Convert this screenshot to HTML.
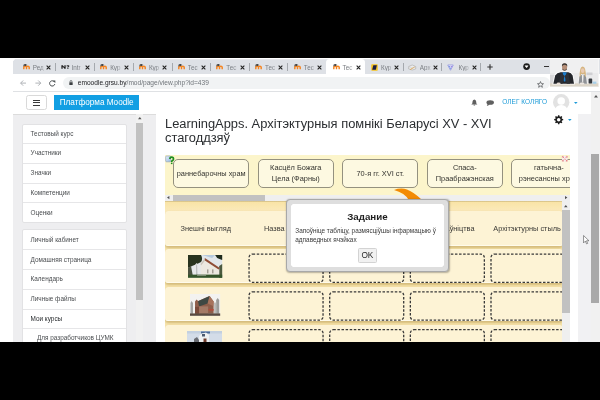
<!DOCTYPE html>
<html><head><meta charset="utf-8">
<style>
*{margin:0;padding:0;box-sizing:border-box}
html,body{width:600px;height:400px;overflow:hidden;background:#fff;font-family:"Liberation Sans",sans-serif}
body{filter:blur(0.3px)}
.a{position:absolute}
svg{display:block;overflow:visible}
#blk1{left:0;top:0;width:600px;height:57.75px;background:#000}
#blk2{left:0;top:341.7px;width:600px;height:59px;background:#000}
#tabs{left:12.5px;top:59.2px;width:588px;height:15.3px;background:#dee1e6;clip-path:polygon(2.5px 0,100% 0,100% 100%,0 100%,0 2.5px)}
.tab{position:absolute;top:59.2px;height:15.3px;width:38.7px}
.tab.act{background:#fff;border-radius:3.5px 3.5px 0 0}
.tab .fav{position:absolute;left:6.4px;top:5.2px;width:7px;height:7px}
.tab .tt{position:absolute;left:16.2px;top:5.9px;font-size:6.3px;line-height:1;color:#7a7e83;white-space:nowrap;width:13px;overflow:hidden;-webkit-mask-image:linear-gradient(90deg,#000 55%,transparent 100%)}
.tab .x{position:absolute;left:29.5px;top:5.4px;width:5px;height:5px}
.sep{position:absolute;top:62.8px;width:0.8px;height:8.6px;background:#a5a9ae}
#toolbar{left:12.5px;top:74.5px;width:588px;height:17px;background:#fff;border-bottom:0.8px solid #dfe1e4}
#omni{left:62.5px;top:77.4px;width:487px;height:11.6px;border-radius:6px;background:#f1f3f4}
#url{left:77.8px;top:79.9px;font-size:6.6px;line-height:1;color:#202124;white-space:nowrap}
#url span{color:#70757a}
#nav{left:12.5px;top:91.5px;width:579px;height:23px;background:#fff;border-bottom:0.8px solid #dcdcdc}
#drawer{left:12.5px;top:114.5px;width:143.5px;height:227.5px;background:#eeeef0}
#main{left:156px;top:114px;width:422px;height:227.5px;background:#fff}
#rgrey{left:578px;top:114px;width:14px;height:227.5px;background:#f1f1f3}
#pscroll{left:591.3px;top:91.5px;width:8.7px;height:250px;background:#f1f1f1}
</style></head><body>
<div class="a" id="blk1"></div>
<div class="a" id="tabs"></div>
<div class="tab" style="left:16.6px"><svg class="fav" style="top:5.3px;height:5.2px" viewBox="0 0 14 10.4"><path d="M1.6 10.4V6.4Q1.6 4.6 4.3 4.6Q7 4.6 7 6.4V10.4M7 6.4Q7 4.6 9.7 4.6Q12.4 4.6 12.4 6.4V10.4" fill="none" stroke="#f5841f" stroke-width="2.9"/><path d="M0.2 2L4.4 0.2L8.6 2L4.4 3.9Z" fill="#2a2a2a"/><path d="M1.3 2.5V5" stroke="#2a2a2a" stroke-width="1.1"/></svg><div class="tt">Ред</div><svg class="x" viewBox="0 0 10 10"><path d="M1.3 1.3L8.7 8.7M8.7 1.3L1.3 8.7" stroke="#202020" stroke-width="2.1"/></svg></div>
<div class="tab" style="left:55.3px"><svg class="fav" style="left:5.4px;top:6.1px;width:8.6px;height:3.8px" viewBox="0 0 16 9" preserveAspectRatio="none"><path d="M0.8 9V0.6H3L6.4 5.6V0.6H8.6V9H6.6L3 3.8V9Z" fill="#111"/><path d="M10 2.8Q10 0.4 12.8 0.4Q15.6 0.4 15.6 2.6Q15.6 4.2 13.8 5V6.2H11.8V4.2Q13.4 3.6 13.4 2.7Q13.4 2 12.8 2Q12 2 12 3Z" fill="#111"/><rect x="11.8" y="7" width="2" height="2" fill="#111"/></svg><div class="tt">Intr</div><svg class="x" viewBox="0 0 10 10"><path d="M1.3 1.3L8.7 8.7M8.7 1.3L1.3 8.7" stroke="#202020" stroke-width="2.1"/></svg></div>
<div class="tab" style="left:94.0px"><svg class="fav" style="top:5.3px;height:5.2px" viewBox="0 0 14 10.4"><path d="M1.6 10.4V6.4Q1.6 4.6 4.3 4.6Q7 4.6 7 6.4V10.4M7 6.4Q7 4.6 9.7 4.6Q12.4 4.6 12.4 6.4V10.4" fill="none" stroke="#f5841f" stroke-width="2.9"/><path d="M0.2 2L4.4 0.2L8.6 2L4.4 3.9Z" fill="#2a2a2a"/><path d="M1.3 2.5V5" stroke="#2a2a2a" stroke-width="1.1"/></svg><div class="tt">Кур</div><svg class="x" viewBox="0 0 10 10"><path d="M1.3 1.3L8.7 8.7M8.7 1.3L1.3 8.7" stroke="#202020" stroke-width="2.1"/></svg></div>
<div class="tab" style="left:132.7px"><svg class="fav" style="top:5.3px;height:5.2px" viewBox="0 0 14 10.4"><path d="M1.6 10.4V6.4Q1.6 4.6 4.3 4.6Q7 4.6 7 6.4V10.4M7 6.4Q7 4.6 9.7 4.6Q12.4 4.6 12.4 6.4V10.4" fill="none" stroke="#f5841f" stroke-width="2.9"/><path d="M0.2 2L4.4 0.2L8.6 2L4.4 3.9Z" fill="#2a2a2a"/><path d="M1.3 2.5V5" stroke="#2a2a2a" stroke-width="1.1"/></svg><div class="tt">Кур</div><svg class="x" viewBox="0 0 10 10"><path d="M1.3 1.3L8.7 8.7M8.7 1.3L1.3 8.7" stroke="#202020" stroke-width="2.1"/></svg></div>
<div class="tab" style="left:171.4px"><svg class="fav" style="top:5.3px;height:5.2px" viewBox="0 0 14 10.4"><path d="M1.6 10.4V6.4Q1.6 4.6 4.3 4.6Q7 4.6 7 6.4V10.4M7 6.4Q7 4.6 9.7 4.6Q12.4 4.6 12.4 6.4V10.4" fill="none" stroke="#f5841f" stroke-width="2.9"/><path d="M0.2 2L4.4 0.2L8.6 2L4.4 3.9Z" fill="#2a2a2a"/><path d="M1.3 2.5V5" stroke="#2a2a2a" stroke-width="1.1"/></svg><div class="tt">Тес</div><svg class="x" viewBox="0 0 10 10"><path d="M1.3 1.3L8.7 8.7M8.7 1.3L1.3 8.7" stroke="#202020" stroke-width="2.1"/></svg></div>
<div class="tab" style="left:210.1px"><svg class="fav" style="top:5.3px;height:5.2px" viewBox="0 0 14 10.4"><path d="M1.6 10.4V6.4Q1.6 4.6 4.3 4.6Q7 4.6 7 6.4V10.4M7 6.4Q7 4.6 9.7 4.6Q12.4 4.6 12.4 6.4V10.4" fill="none" stroke="#f5841f" stroke-width="2.9"/><path d="M0.2 2L4.4 0.2L8.6 2L4.4 3.9Z" fill="#2a2a2a"/><path d="M1.3 2.5V5" stroke="#2a2a2a" stroke-width="1.1"/></svg><div class="tt">Тес</div><svg class="x" viewBox="0 0 10 10"><path d="M1.3 1.3L8.7 8.7M8.7 1.3L1.3 8.7" stroke="#202020" stroke-width="2.1"/></svg></div>
<div class="tab" style="left:248.8px"><svg class="fav" style="top:5.3px;height:5.2px" viewBox="0 0 14 10.4"><path d="M1.6 10.4V6.4Q1.6 4.6 4.3 4.6Q7 4.6 7 6.4V10.4M7 6.4Q7 4.6 9.7 4.6Q12.4 4.6 12.4 6.4V10.4" fill="none" stroke="#f5841f" stroke-width="2.9"/><path d="M0.2 2L4.4 0.2L8.6 2L4.4 3.9Z" fill="#2a2a2a"/><path d="M1.3 2.5V5" stroke="#2a2a2a" stroke-width="1.1"/></svg><div class="tt">Тес</div><svg class="x" viewBox="0 0 10 10"><path d="M1.3 1.3L8.7 8.7M8.7 1.3L1.3 8.7" stroke="#202020" stroke-width="2.1"/></svg></div>
<div class="tab" style="left:287.5px"><svg class="fav" style="top:5.3px;height:5.2px" viewBox="0 0 14 10.4"><path d="M1.6 10.4V6.4Q1.6 4.6 4.3 4.6Q7 4.6 7 6.4V10.4M7 6.4Q7 4.6 9.7 4.6Q12.4 4.6 12.4 6.4V10.4" fill="none" stroke="#f5841f" stroke-width="2.9"/><path d="M0.2 2L4.4 0.2L8.6 2L4.4 3.9Z" fill="#2a2a2a"/><path d="M1.3 2.5V5" stroke="#2a2a2a" stroke-width="1.1"/></svg><div class="tt">Тес</div><svg class="x" viewBox="0 0 10 10"><path d="M1.3 1.3L8.7 8.7M8.7 1.3L1.3 8.7" stroke="#202020" stroke-width="2.1"/></svg></div>
<div class="tab act" style="left:326.2px"><svg class="fav" style="top:5.3px;height:5.2px" viewBox="0 0 14 10.4"><path d="M1.6 10.4V6.4Q1.6 4.6 4.3 4.6Q7 4.6 7 6.4V10.4M7 6.4Q7 4.6 9.7 4.6Q12.4 4.6 12.4 6.4V10.4" fill="none" stroke="#f5841f" stroke-width="2.9"/><path d="M0.2 2L4.4 0.2L8.6 2L4.4 3.9Z" fill="#2a2a2a"/><path d="M1.3 2.5V5" stroke="#2a2a2a" stroke-width="1.1"/></svg><div class="tt">Тес</div><svg class="x" viewBox="0 0 10 10"><path d="M1.3 1.3L8.7 8.7M8.7 1.3L1.3 8.7" stroke="#202020" stroke-width="2.1"/></svg></div>
<div class="tab" style="left:364.9px"><svg class="fav" style="top:4.6px" viewBox="0 0 14 14"><rect x="0.5" y="0.5" width="13" height="13" rx="1.5" fill="#f6c21c"/><path d="M4.6 2.4H11.8L9.6 11.6H2.4Z" fill="#1a1d45"/></svg><div class="tt">Кур</div><svg class="x" viewBox="0 0 10 10"><path d="M1.3 1.3L8.7 8.7M8.7 1.3L1.3 8.7" stroke="#202020" stroke-width="2.1"/></svg></div>
<div class="tab" style="left:403.6px"><svg class="fav" style="top:4.6px;left:4.6px;width:8.4px" viewBox="0 0 16 14"><path d="M1 5L8 2L15 5L15 10L8 12L1 10Z" fill="#ececec" stroke="#9c9c9c" stroke-width="1"/><path d="M4 11L13 6" stroke="#e09a32" stroke-width="1.6"/><path d="M1 5L8 8L15 5" fill="none" stroke="#bdbdbd" stroke-width="0.8"/></svg><div class="tt">Арх</div><svg class="x" viewBox="0 0 10 10"><path d="M1.3 1.3L8.7 8.7M8.7 1.3L1.3 8.7" stroke="#202020" stroke-width="2.1"/></svg></div>
<div class="tab" style="left:442.3px"><svg class="fav" style="top:4.4px;left:4.6px" viewBox="0 0 14 14"><path d="M1.5 2H12.5L7 12.5Z" fill="#f2f2fb" stroke="#8588dc" stroke-width="1.4" stroke-linejoin="round"/><circle cx="5" cy="5.5" r="1.6" fill="#6f8fe0"/><circle cx="9" cy="5.5" r="1.6" fill="#9a7fe0"/><circle cx="7" cy="8.6" r="1.4" fill="#7a9ae8"/></svg><div class="tt">Кур</div><svg class="x" viewBox="0 0 10 10"><path d="M1.3 1.3L8.7 8.7M8.7 1.3L1.3 8.7" stroke="#202020" stroke-width="2.1"/></svg></div>
<div class="sep" style="left:54.9px"></div>
<div class="sep" style="left:94.3px"></div>
<div class="sep" style="left:132.9px"></div>
<div class="sep" style="left:171.8px"></div>
<div class="sep" style="left:210.3px"></div>
<div class="sep" style="left:248.9px"></div>
<div class="sep" style="left:287.4px"></div>
<div class="sep" style="left:402.9px"></div>
<div class="sep" style="left:441.3px"></div>
<div class="sep" style="left:480.4px"></div>

<!-- tab strip right controls -->
<svg class="a" style="left:487px;top:64px;width:6px;height:6px" viewBox="0 0 10 10"><path d="M5 0.5V9.5M0.5 5H9.5" stroke="#333" stroke-width="1.9"/></svg>
<svg class="a" style="left:522.5px;top:63.4px;width:7.2px;height:7.2px" viewBox="0 0 10 10"><circle cx="5" cy="5" r="4.7" fill="#1e1e1e"/><path d="M2.9 3.9H7.1L5 6.6Z" fill="#fff" stroke="#fff" stroke-width="0.8" stroke-linejoin="round"/></svg>
<div class="a" style="left:543.5px;top:65.8px;width:5.5px;height:1.2px;background:#333"></div>
<!-- toolbar -->
<div class="a" id="toolbar"></div>
<svg class="a" style="left:20px;top:80px;width:6.4px;height:6.2px" viewBox="0 0 10 10"><path d="M9.5 5H1M5 0.8L0.8 5L5 9.2" fill="none" stroke="#a3a7ab" stroke-width="1.4"/></svg>
<svg class="a" style="left:34.6px;top:80px;width:6.4px;height:6.2px" viewBox="0 0 10 10"><path d="M0.5 5H9M5 0.8L9.2 5L5 9.2" fill="none" stroke="#a3a7ab" stroke-width="1.4"/></svg>
<svg class="a" style="left:48.9px;top:79.8px;width:6.6px;height:6.6px" viewBox="0 0 10 10"><path d="M8.6 3.6A4 4 0 1 0 8.8 6.2" fill="none" stroke="#3c4043" stroke-width="1.4"/><path d="M6.2 0.6L9.6 0.6L9.6 4.2Z" fill="#3c4043"/></svg>
<div class="a" id="omni"></div>
<svg class="a" style="left:68.6px;top:80.2px;width:4px;height:5.4px" viewBox="0 0 8 11"><path d="M2 5V3.4Q2 1 4 1Q6 1 6 3.4V5" fill="none" stroke="#3c4043" stroke-width="1.4"/><rect x="0.6" y="4.6" width="6.8" height="5.8" rx="0.8" fill="#3c4043"/></svg>
<div class="a" id="url">emoodle.grsu.by<span>/mod/page/view.php?id=439</span></div>
<svg class="a" style="left:537.3px;top:80.6px;width:7px;height:7px" viewBox="0 0 10 10"><path d="M5 0.8L6.2 3.7L9.3 3.9L6.9 5.9L7.7 9L5 7.3L2.3 9L3.1 5.9L0.7 3.9L3.8 3.7Z" fill="none" stroke="#3c4043" stroke-width="0.9" stroke-linejoin="round"/></svg>
<!-- webcam -->
<svg class="a" style="left:549.6px;top:59.2px;width:49px;height:27.5px;filter:blur(0.25px)" viewBox="0 0 49 27.5" preserveAspectRatio="none">
<rect width="49" height="27.5" fill="#eaeaeb"/>
<rect x="0" y="0" width="49" height="14" fill="#f0f0f1"/>
<rect x="36.5" y="13.5" width="6" height="2.6" fill="#d0d0d3"/>
<rect x="0" y="16" width="5" height="9" fill="#d8d8da"/>
<rect x="0" y="24.3" width="49" height="3.2" fill="#dcd5c8"/>
<path d="M2.2 25.5L4.2 16Q6 13 10.5 12.6L18.5 12.6Q22 13 23.4 16L25 25.5Z" fill="#fff" opacity=".8"/>
<path d="M3.4 24.8L5.2 16.4Q6.8 13.6 10.8 13.2L18.2 13.2Q21.4 13.6 22.6 16.4L24 24.8Z" fill="#24262b"/>
<path d="M12.6 13.2H16.6L15.4 22.6H13.8Z" fill="#1d7fcf"/>
<path d="M10.8 13.2L14.6 17L12.4 24.8L9 24.8Z" fill="#2e3036"/>
<path d="M18.2 13.2L14.6 17L16.8 24.8L20 24.8Z" fill="#2e3036"/>
<ellipse cx="14.6" cy="8" rx="3" ry="3.7" fill="#fff" opacity=".7"/>
<ellipse cx="14.6" cy="8" rx="2.6" ry="3.4" fill="#b68f78"/>
<path d="M11.9 7.4Q11.7 4.2 14.6 4.2Q17.5 4.2 17.3 7.4Q16.5 5.6 14.6 5.7Q12.7 5.7 11.9 7.4Z" fill="#3a3533"/>
<path d="M12.4 9.6Q14.6 12.2 16.8 9.6V10.8Q14.6 12.6 12.4 10.8Z" fill="#5d4d45"/>
<ellipse cx="8.6" cy="24.4" rx="2" ry="1" fill="#e8ddd4"/>
<path d="M28 25L28.8 17.4Q30 15 32.7 15Q35.4 15 36.6 17.4L37.6 25Z" fill="#fff" opacity=".7"/>
<path d="M28.6 24.8L29.3 17.8Q30.3 15.6 32.7 15.6Q35.1 15.6 36.1 17.8L37 24.8Z" fill="#909397"/>
<path d="M31.8 15.8H33.6L33.2 23.6H32.2Z" fill="#efeeec"/>
<path d="M29.7 18.2Q29.2 7.6 32.7 7.4Q36.2 7.6 35.8 18.2Q34.6 17.6 34.3 15H31.1Q30.8 17.6 29.7 18.2Z" fill="#d6b580"/>
<ellipse cx="32.7" cy="11.7" rx="1.8" ry="2.4" fill="#e8cab2"/>
<ellipse cx="32" cy="24.4" rx="2.4" ry="1" fill="#ece6e0"/>
<rect x="38.6" y="19.6" width="3.6" height="5" rx="0.8" fill="#363a40"/>
<rect x="42.6" y="22.6" width="3.8" height="2.2" fill="#a7d0ea"/>
<path d="M48.4 0H49V27.5H48.4Z" fill="#fafafa"/>
</svg>
<!-- moodle navbar -->
<div class="a" id="nav"></div>
<div class="a" style="left:26.3px;top:95.2px;width:20.6px;height:15px;border:0.8px solid #d9d9d9;border-radius:2.5px;background:#fff"></div>
<div class="a" style="left:33.3px;top:99.7px;width:6.5px;height:1.3px;background:#3a3a3a"></div>
<div class="a" style="left:33.3px;top:102.2px;width:6.5px;height:1.3px;background:#3a3a3a"></div>
<div class="a" style="left:33.3px;top:104.7px;width:6.5px;height:1.3px;background:#3a3a3a"></div>
<div class="a" style="left:53.5px;top:95.2px;width:85.2px;height:15px;background:#129fe3"></div>
<div class="a" style="left:59.7px;top:99.0px;font-size:8.2px;line-height:1;color:#fff;white-space:nowrap">Платформа Moodle</div>
<svg class="a" style="left:470.6px;top:99px;width:6.7px;height:6.7px" viewBox="0 0 10 10"><path d="M5 0.6Q7.6 0.8 7.8 4.2L8 6.6L9.6 8.2H0.4L2 6.6L2.2 4.2Q2.4 0.8 5 0.6Z" fill="#5f5f5f"/><ellipse cx="5" cy="9" rx="1.3" ry="0.9" fill="#5f5f5f"/></svg>
<svg class="a" style="left:486px;top:99.8px;width:8px;height:6.2px" viewBox="0 0 12 9.3"><ellipse cx="6.3" cy="3.8" rx="5.6" ry="3.5" fill="#5f5f5f"/><path d="M2.6 5.6L1.2 9.2L5.6 7Z" fill="#5f5f5f"/></svg>
<div class="a" style="left:502.3px;top:99.4px;font-size:6.5px;line-height:1;color:#1d9bd8;white-space:nowrap;letter-spacing:0px">ОЛЕГ КОЛЯГО</div>
<svg class="a" style="left:552.6px;top:93.8px;width:16.4px;height:16.4px" viewBox="0 0 20 20"><circle cx="10" cy="10" r="10" fill="#e2e2e2"/><circle cx="10" cy="8.6" r="4.6" fill="#fff"/><path d="M2.6 20Q3 13.6 10 13.4Q17 13.6 17.4 20Z" fill="#fff"/></svg>
<svg class="a" style="left:574.3px;top:101.6px;width:3.6px;height:2px" viewBox="0 0 6 3"><path d="M0 0H6L3 3Z" fill="#1d9bd8"/></svg>

<!-- drawer -->
<div class="a" id="drawer"></div>
<style>
.grp{position:absolute;left:21.9px;width:104.7px;background:#fff;border:0.8px solid #e2e2e4;border-radius:2px}
.it{position:absolute;left:0;width:100%;height:19.7px;border-top:0.8px solid #e6e6e8}
.it:first-child{border-top:none}
.it span{position:absolute;left:7.7px;top:6.2px;font-size:6.4px;line-height:1;color:#4a4d50;white-space:nowrap}
</style>
<div class="grp" style="top:123.6px;height:99.2px">
<div class="it" style="top:0"><span>Тестовый курс</span></div>
<div class="it" style="top:18.7px"><span>Участники</span></div>
<div class="it" style="top:38.5px"><span>Значки</span></div>
<div class="it" style="top:58.3px"><span>Компетенции</span></div>
<div class="it" style="top:77.9px"><span>Оценки</span></div>
</div>
<div class="grp" style="top:229.4px;height:130px">
<div class="it" style="top:0"><span>Личный кабинет</span></div>
<div class="it" style="top:19.0px"><span>Домашняя страница</span></div>
<div class="it" style="top:38.2px"><span>Календарь</span></div>
<div class="it" style="top:58.4px"><span>Личные файлы</span></div>
<div class="it" style="top:78.2px"><span style="color:#26292c">Мои курсы</span></div>
<div class="it" style="top:97.7px"><span style="left:14px">Для разработчиков ЦУМК</span></div>
</div>
<div class="a" style="left:135.8px;top:114px;width:7.2px;height:227.5px;background:#f1f1f1"></div>
<svg class="a" style="left:137.6px;top:116.9px;width:3.6px;height:2.2px" viewBox="0 0 6 3.6"><path d="M0 3.6L3 0L6 3.6Z" fill="#555"/></svg>
<div class="a" style="left:135.8px;top:122.7px;width:7.2px;height:177.3px;background:#c1c1c1"></div>
<!-- main -->
<div class="a" id="main"></div>
<div class="a" style="left:165px;top:116.5px;font-size:12.88px;line-height:14.2px;color:#2b2e31;white-space:nowrap">LearningApps. Архітэктурныя помнікі Беларусі XV - XVI<br>стагоддзяў</div>
<svg class="a" style="left:553.6px;top:115.2px;width:9.4px;height:9.4px" viewBox="0 0 20 20"><path d="M8.6 1H11.4L11.9 3.6L13.6 4.3L15.8 2.8L17.8 4.8L16.3 7L17 8.7L19.6 9.2V12L17 12.5L16.3 14.2L17.8 16.4L15.8 18.4L13.6 16.9L11.9 17.6L11.4 20.2H8.6L8.1 17.6L6.4 16.9L4.2 18.4L2.2 16.4L3.7 14.2L3 12.5L0.4 12V9.2L3 8.7L3.7 7L2.2 4.8L4.2 2.8L6.4 4.3L8.1 3.6Z" fill="#1c1c1c" transform="translate(0,-0.6)"/><circle cx="10" cy="10" r="3.8" fill="#fff"/></svg>
<svg class="a" style="left:568.2px;top:118.6px;width:3.6px;height:2px" viewBox="0 0 6 3"><path d="M0 0H6L3 3Z" fill="#1d9bd8"/></svg>
<div class="a" id="rgrey"></div>
<div class="a" id="pscroll"></div>
<svg class="a" style="left:593.8px;top:94.8px;width:4px;height:2.4px" viewBox="0 0 6 3.6"><path d="M0 3.6L3 0L6 3.6Z" fill="#555"/></svg>
<div class="a" style="left:591.3px;top:153.6px;width:7.6px;height:149.2px;background:#a9a9a9"></div>

<!-- LearningApps frame -->
<style>
#la{position:absolute;left:164.6px;top:154.6px;width:405.1px;height:187px;overflow:hidden;background:#f8e5ad}
#strip{position:absolute;left:0;top:0;width:405.1px;height:40.4px;background:#fcf5cb}
.card{position:absolute;top:4.6px;width:75.6px;height:29px;border:1px solid #94917f;border-radius:5px;background:#fdf9e1;display:flex;align-items:center;justify-content:center;text-align:center;font-size:7.4px;line-height:10.2px;color:#33332e}
#hsb{position:absolute;left:0;top:40.2px;width:405.1px;height:6.4px;background:#efefef}
.row{position:absolute;left:0.65px;width:397.3px;background:#fdf3d5;border-radius:3.5px;box-shadow:0 1.4px 2.2px rgba(165,130,55,.42), inset 0 -0.8px 0.4px rgba(255,255,245,.9)}
.hd{position:absolute;height:35px;display:flex;align-items:center;justify-content:center;font-size:7.35px;line-height:1;color:#3a3935;white-space:nowrap}
#vsb{position:absolute;left:397.9px;top:46.6px;width:7.2px;height:141px;background:#efefef}
</style>
<div id="la">
<div class="a" style="left:0;top:46.6px;width:398px;height:12px;background:linear-gradient(#f9e3a4,#fbebbf)"></div><div class="a" style="left:0;top:46.6px;width:405px;height:1.2px;background:linear-gradient(rgba(120,100,50,.45),rgba(120,100,50,0))"></div>
<div id="strip">
<div class="card" style="left:8.8px">раннебарочны храм</div>
<div class="card" style="left:93.4px">Касцёл Божага<br>Цела (Фарны)</div>
<div class="card" style="left:177.9px">70-я гг. XVI ст.</div>
<div class="card" style="left:262.4px">Спаса-<br>Праабражэнская</div>
<div class="card" style="left:346.5px">гатычна-<br>рэнесансны храм</div>
</div>
<svg class="a" style="left:0;top:0;width:10px;height:10px" viewBox="0 0 10 10"><defs><linearGradient id="hg" x1="0" y1="0" x2="1" y2="1"><stop offset="0" stop-color="#eef6ff"/><stop offset="1" stop-color="#8fb4e0"/></linearGradient></defs><rect x="0.7" y="1" width="5" height="5.8" rx="0.9" fill="url(#hg)" stroke="#8c9cb0" stroke-width="0.6"/><path d="M4.9 4Q4.9 2.2 6.7 2.2Q8.5 2.2 8.5 3.9Q8.5 5 7.4 5.5Q6.7 5.9 6.7 6.9" fill="none" stroke="#1f8f1f" stroke-width="1.7"/><rect x="5.9" y="7.6" width="1.6" height="1.5" fill="#1f8f1f"/></svg>
<svg class="a" style="left:397.6px;top:1.4px;width:5.6px;height:5.6px" viewBox="0 0 10 10"><rect width="10" height="10" fill="#f7eeee"/><path d="M1 1L4 4M9 1L6 4M1 9L4 6M9 9L6 6" stroke="#e06a6a" stroke-width="1.3"/><path d="M0.6 0.6H3.2M0.6 0.6V3.2M9.4 0.6H6.8M9.4 0.6V3.2M0.6 9.4H3.2M0.6 9.4V6.8M9.4 9.4H6.8M9.4 9.4V6.8" stroke="#e06a6a" stroke-width="0.9"/></svg>
<div id="hsb"></div>
<svg class="a" style="left:2.4px;top:41.9px;width:2.4px;height:3.2px" viewBox="0 0 3 4"><path d="M3 0V4L0 2Z" fill="#505050"/></svg>
<div class="a" style="left:8.2px;top:40.2px;width:92.5px;height:6.4px;background:#c1c1c1"></div>
<svg class="a" style="left:400.2px;top:41.9px;width:2.4px;height:3.2px" viewBox="0 0 3 4"><path d="M0 0V4L3 2Z" fill="#505050"/></svg>
<!-- table -->
<div class="row" style="top:56.60px;height:35.1px"></div>
<div class="row" style="top:94.70px;height:33.9px"></div>
<div class="row" style="top:132.70px;height:33.9px"></div>
<div class="row" style="top:170.40px;height:40px"></div>
<div class="a hd" style="left:0.65px;top:56.80px;width:81px">Знешні выгляд</div>
<div class="a hd" style="left:99.4px;top:56.80px;width:46px;justify-content:flex-start">Назва помніка</div>
<div class="a hd" style="left:252.9px;top:56.80px;width:57px;justify-content:flex-end">Час будаўніцтва</div>
<div class="a hd" style="left:328.7px;top:56.80px;width:68px;justify-content:flex-start">Архітэктурны стыль</div>
<svg class="a" style="left:0;top:0;width:405px;height:187px" viewBox="0 0 405 187"><g fill="none" stroke="#393939" stroke-width="1.3" stroke-dasharray="2.5 1.6"><rect x="84.05" y="99.05" width="74.00" height="28.30" rx="3.6"/><rect x="164.70" y="99.05" width="74.00" height="28.30" rx="3.6"/><rect x="245.35" y="99.05" width="74.00" height="28.30" rx="3.6"/><rect x="326.00" y="99.05" width="74.00" height="28.30" rx="3.6"/><rect x="84.05" y="136.85" width="74.00" height="28.30" rx="3.6"/><rect x="164.70" y="136.85" width="74.00" height="28.30" rx="3.6"/><rect x="245.35" y="136.85" width="74.00" height="28.30" rx="3.6"/><rect x="326.00" y="136.85" width="74.00" height="28.30" rx="3.6"/><rect x="84.05" y="174.65" width="74.00" height="28.30" rx="3.6"/><rect x="164.70" y="174.65" width="74.00" height="28.30" rx="3.6"/><rect x="245.35" y="174.65" width="74.00" height="28.30" rx="3.6"/><rect x="326.00" y="174.65" width="74.00" height="28.30" rx="3.6"/></g></svg>
<!-- images -->
<svg class="a" style="left:23.30px;top:100.40px;width:34.2px;height:22.8px;filter:blur(0.35px)" viewBox="0 0 34 23" preserveAspectRatio="none">
<rect width="34" height="23" fill="#e2e6ea"/>
<path d="M14 0H27L24 3Z" fill="#b6c9dd"/>
<path d="M0 0H13Q15 4 13 7L9 9L4 11L0 13Z" fill="#28331f"/>
<path d="M0 13L3 11L5 22H0Z" fill="#4a5140"/>
<path d="M27 0H34V5Q31 4 29 3Z" fill="#1f2a1b"/>
<path d="M31 11L34 9V23H31Z" fill="#4c5a3f"/>
<path d="M5 22V13L8.5 8L12 12V22Z" fill="#e6e7e9"/>
<path d="M8 11L9 8L9.5 22H8Z" fill="#b9bbbd"/>
<path d="M12.5 22V8L17 3.5L31 13.5V22Z" fill="#ece8e0"/>
<path d="M16.8 3L31.6 13L30.4 14.6L16.4 5.4Z" fill="#8f4c35"/>
<path d="M12.5 9L16.6 3.6L16.8 5.8L13 10.5Z" fill="#c9c3b9"/>
<rect x="19" y="14.5" width="1.3" height="4" fill="#9a958c"/><rect x="24" y="14.5" width="1.3" height="4" fill="#9a958c"/>
<rect x="0" y="19.8" width="34" height="3.2" fill="#34542a"/>
<rect x="9" y="20.2" width="9" height="0.9" fill="#8a9580"/>
</svg>
<svg class="a" style="left:25.30px;top:139.15px;width:30.2px;height:21.8px;filter:blur(0.35px)" viewBox="0 0 30 22" preserveAspectRatio="none">
<rect width="30" height="22" fill="#f3f2f0"/>
<path d="M0.5 20V9L1.5 7L3 9V20Z" fill="#a4a4a2"/>
<path d="M26 20V6L27.5 4L29 6V20Z" fill="#9c9c99"/>
<path d="M24 20V9L25 8L26 10V20Z" fill="#b8b8b5"/>
<path d="M5 20V7.5L6.5 5.5L8 7L19.5 2L23.5 7.5V20Z" fill="#8f5e4a"/>
<path d="M8 7.2L19.5 2L17.5 9.5L9 12.5Z" fill="#3f4843"/>
<path d="M17.5 9.5L19.5 2L23.5 7.5L23 12Z" fill="#a7735c"/>
<rect x="9" y="12.5" width="9" height="7.5" fill="#a47a66"/>
<rect x="5" y="13" width="4" height="7" fill="#7a4a3a"/>
<rect x="18.5" y="15.2" width="5" height="1.6" fill="#b5493a"/>
<rect x="0" y="19.6" width="30" height="2.4" fill="#5a4a40"/>
</svg>
<svg class="a" style="left:22.90px;top:176.50px;width:35px;height:12px;filter:blur(0.35px)" viewBox="0 0 35 12" preserveAspectRatio="none">
<rect width="35" height="12" fill="#d3dce8"/>
<rect x="0" y="0" width="35" height="2.5" fill="#c3d0e0"/>
<path d="M14 0.5H23V2.5H14Z" fill="#4a6a98"/>
<path d="M7 12V8L10 6L12 9V12Z" fill="#6a6d74"/>
<path d="M12 12V5L15 2.5L19 1.5L22 4V12Z" fill="#eef0f2"/>
<rect x="15" y="3" width="3" height="2.5" fill="#4b5a70"/>
<rect x="16.5" y="7.5" width="3" height="4.5" fill="#6e3a2a"/>
</svg>
<div id="vsb"></div>
<svg class="a" style="left:399.7px;top:50.2px;width:3.6px;height:2.2px" viewBox="0 0 6 3.6"><path d="M0 3.6L3 0L6 3.6Z" fill="#505050"/></svg>
<div class="a" style="left:397.9px;top:55.6px;width:7.2px;height:103.1px;background:#c1c1c1"></div>
<!-- orange spinner piece -->
<svg class="a" style="left:228.40px;top:33.40px;width:30px;height:12px" viewBox="0 0 30 12"><path d="M1 2Q8 -0.6 14 1.6Q21 4.4 28.8 11.8H15.6Q11.5 4.8 1 2Z" fill="#f38b04"/></svg>
</div>
<!-- modal -->
<div class="a" style="left:285.6px;top:199.2px;width:163px;height:72.4px;border-radius:4px;background:#dedede;border:0.7px solid #a8a8a8;box-shadow:0.4px 0.8px 1.6px rgba(0,0,0,.28)"></div>
<div class="a" style="left:290.7px;top:204.4px;width:153.4px;height:62.2px;background:#fff;border-radius:2px;box-shadow:0 0 0.6px rgba(0,0,0,.25)"></div>
<div class="a" style="left:347.2px;top:211.6px;font-size:9.75px;line-height:1;font-weight:bold;color:#1e1e1e;white-space:nowrap">Задание</div>
<div class="a" style="left:295.3px;top:227.3px;font-size:6.41px;line-height:8.7px;color:#3a3a3a;white-space:nowrap">Запоўніце табліцу, размясціўшы інфармацыю ў<br>адпаведных ячэйках</div>
<div class="a" style="left:357.9px;top:248px;width:19.2px;height:14.6px;background:#f1f1f1;border:0.8px solid #d3d3d3;border-radius:1.5px"></div>
<div class="a" style="left:361.4px;top:251.4px;font-size:8.3px;line-height:1;color:#262626">OK</div>
<!-- cursor -->
<svg class="a" style="left:583.3px;top:234.6px;width:6.4px;height:9.4px" viewBox="0 0 10 15"><path d="M0.8 0.8V12.6L3.6 9.8L5.6 14.2L7.4 13.4L5.4 9.2H9.4Z" fill="#fff" stroke="#444" stroke-width="0.9" stroke-linejoin="round"/></svg>
<div class="a" id="blk2"></div>
</body></html>
